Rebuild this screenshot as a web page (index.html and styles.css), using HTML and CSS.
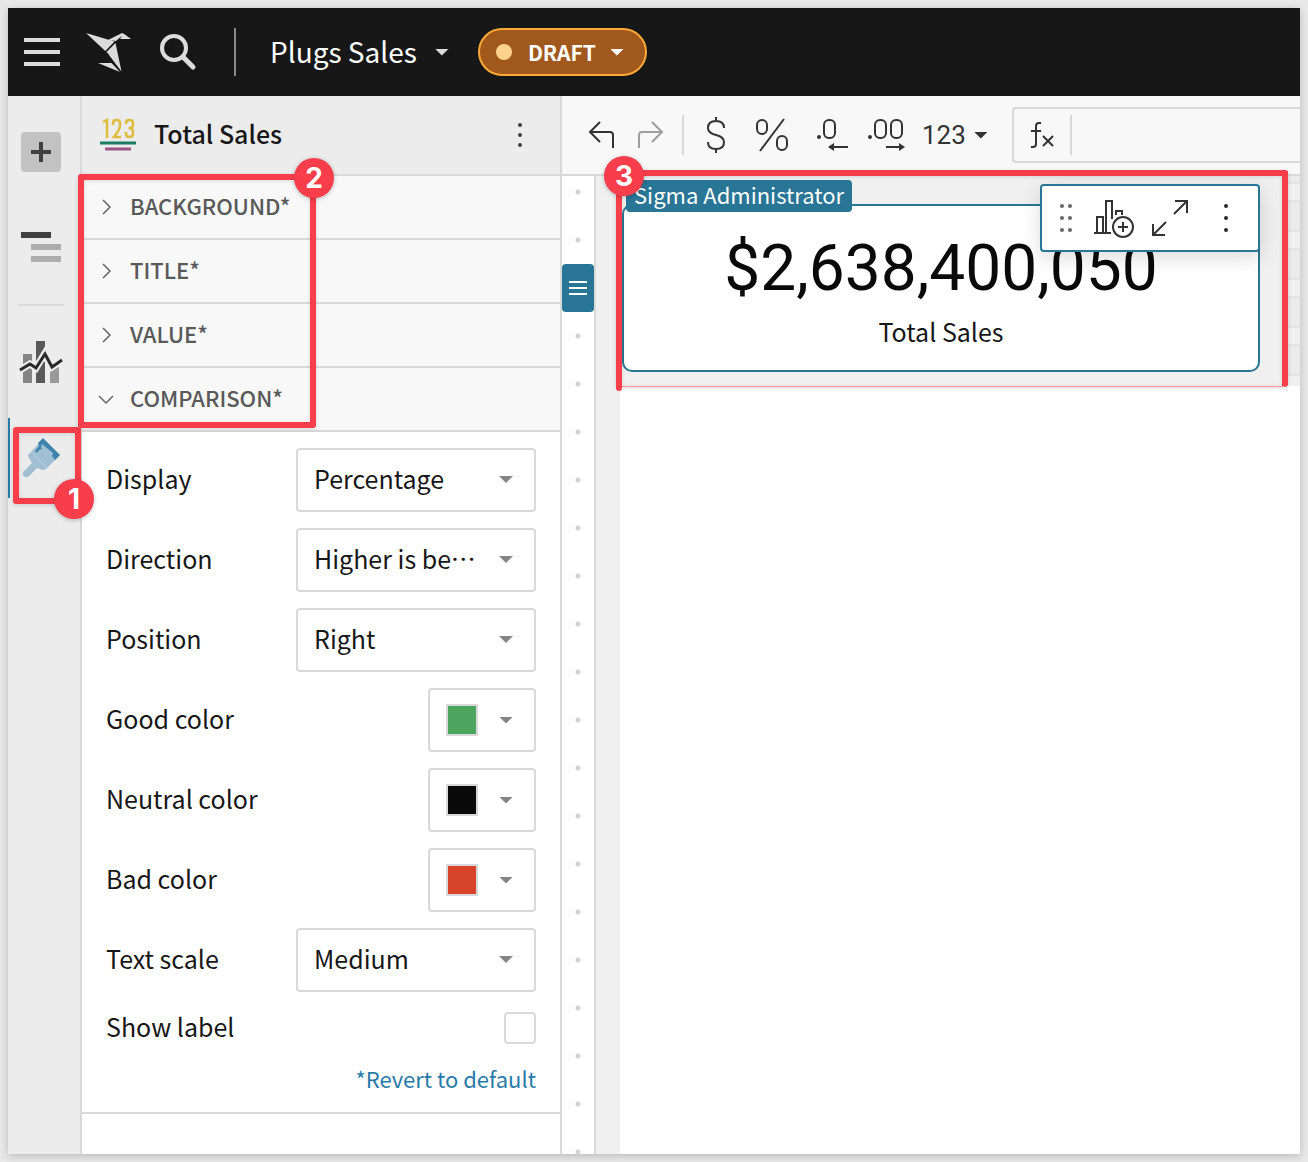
FILE: index.html
```html
<!DOCTYPE html>
<html lang="en">
<head>
<meta charset="utf-8">
<title>Plugs Sales</title>
<link rel="stylesheet" href="styles.css">
</head>
<body>
<div class="app">
  <header class="topbar">
    <button class="icon-btn" aria-label="Menu"><svg width="36" height="28"><path d="M0 2h36M0 14h36M0 26h36" stroke="#dcdcdc" stroke-width="4"/></svg></button>
    <a class="logo" href="#" aria-label="Home"><svg width="48" height="44" fill="#dcdcdc"><path d="M2 3l28.500 8.500L21.300 21zM24 10l14-7 2 1-8 7zM39.500 3.500L47 9H36zM22.500 22l9-9 6 28.500zM14 33h13.500l8.500 9z"/><path d="M23 23l13 18.500" stroke="#171717" stroke-width="1"/></svg></a>
    <button class="icon-btn" aria-label="Search"><svg width="38" height="38" fill="none" stroke="#dcdcdc"><circle cx="14" cy="15" r="12" stroke-width="4"/><path d="M23 24l10 10" stroke-width="5" stroke-linecap="round"/></svg></button>
    <span class="topbar-divider"></span>
    <button class="doc-title"><span>Plugs Sales</span><span class="caret"></span></button>
    <button class="draft"><span class="draft-dot"></span>DRAFT<span class="caret"></span></button>
  </header>

  <div class="workspace">
    <nav class="rail" aria-label="Editor panels">
      <button class="rail-item" aria-label="Add"><span class="plus"><svg width="20" height="20"><path d="M10 0v20M0 10h20" stroke="#404040" stroke-width="4"/></svg></span></button>
      <button class="rail-item" aria-label="Page outline"><svg width="40" height="32"><path d="M0 3h30" stroke="#404040" stroke-width="6"/><path d="M10 15h30M10 27h30" stroke="#adadad" stroke-width="6"/></svg></button>
      <span class="rail-divider"></span>
      <button class="rail-item" aria-label="Element properties"><svg width="44" height="44" fill="none"><path d="M4 14h9v29H4z" fill="#858585"/><path d="M17 1h9v42h-9z" fill="#595959"/><path d="M31 28l9-6v21h-9z" fill="#999"/><path d="M1 30l10-6 6 4 9-15 7 14 11-7" stroke="#ececec" stroke-width="7"/><path d="M27 1v6l-6 15h6z" fill="#ececec"/><path d="M1 30l10-6 6 4 9-14 7 13 10-7" stroke="#292929" stroke-width="3"/></svg></button>
      <button class="rail-item is-active" aria-label="Element format"><svg width="42" height="40" viewBox="0 2 42 40"><path d="M23 3l17 16-14 14c-4 3-6-1-9-1L10 39c-2 4-9 2-7-3l9-9c-1-3-4-5-4-8z" fill="#a1bfd3"/><path d="M18 7l5-5 17 17-5 5-3-4 1-3-11-9-1 3 1 2-3 1-2 3-2-2 4-5z" fill="#3c84ae"/><path d="M11 16l15 15" stroke="#b9cfde"/></svg></button>
    </nav>

    <aside class="panel">
      <header class="panel-header">
        <svg width="36" height="34" fill="none"><path d="M3 4l4-2v18M13 7V5q0-3 3.500-3t3.500 3v3q0 3-6 11h7M26 6V5q0-3 3.500-3t3.500 3v2q0 3-4.500 3q4.500 0 4.500 4v2q0 3-3.500 3t-3.500-3v-2" stroke="#e0bc3e" stroke-width="2.500"/><path d="M0 25h36" stroke="#1c7c64" stroke-width="3"/><path d="M5 31h26" stroke="#9a5384" stroke-width="3"/></svg>
        <h1>Total Sales</h1>
        <button class="icon-btn" aria-label="More"><svg width="8" height="28" fill="#404040"><circle cx="4" cy="4" r="2"/><circle cx="4" cy="14" r="2"/><circle cx="4" cy="24" r="2"/></svg></button>
      </header>
      <button class="section"><svg class="chevron" width="18" height="18"><path d="M6 2l7 7-7 7"/></svg><span>BACKGROUND*</span></button>
      <button class="section"><svg class="chevron" width="18" height="18"><path d="M6 2l7 7-7 7"/></svg><span>TITLE*</span></button>
      <button class="section"><svg class="chevron" width="18" height="18"><path d="M6 2l7 7-7 7"/></svg><span>VALUE*</span></button>
      <button class="section" aria-expanded="true"><svg class="chevron" width="18" height="18"><path d="M2 6l7 7 7-7"/></svg><span>COMPARISON*</span></button>
      <form class="fields">
        <div class="field"><label for="display">Display</label><span class="select"><select id="display"><option>Percentage</option></select></span></div>
        <div class="field"><label for="direction">Direction</label><span class="select"><select id="direction"><option>Higher is better</option></select></span></div>
        <div class="field"><label for="position">Position</label><span class="select"><select id="position"><option>Right</option></select></span></div>
        <div class="field"><label for="good">Good color</label><button type="button" class="color" id="good"><span class="swatch good"></span><span class="caret"></span></button></div>
        <div class="field"><label for="neutral">Neutral color</label><button type="button" class="color" id="neutral"><span class="swatch neutral"></span><span class="caret"></span></button></div>
        <div class="field"><label for="bad">Bad color</label><button type="button" class="color" id="bad"><span class="swatch bad"></span><span class="caret"></span></button></div>
        <div class="field"><label for="scale">Text scale</label><span class="select"><select id="scale"><option>Medium</option></select></span></div>
        <div class="field short"><label for="show">Show label</label><input type="checkbox" id="show"></div>
        <a class="revert" href="#">*Revert to default</a>
      </form>
    </aside>

    <main class="main">
      <div class="toolbar">
        <button class="icon-btn" aria-label="Undo"><svg class="line" width="28" height="28"><path d="M13 1L3 11l10 10M3 11h20q3 0 3 3v13"/></svg></button>
        <button class="icon-btn redo" aria-label="Redo" disabled><svg class="line" width="28" height="28"><path d="M15 1l10 10-10 10M25 11H5q-3 0-3 3v13"/></svg></button>
        <span class="toolbar-divider"></span>
        <button class="icon-btn currency" aria-label="Currency"><svg class="line" width="20" height="36"><path d="M10 0v5M10 31v5M18 11q0-7-8-7t-8 7q0 5 8 7t8 7q0 7-8 7t-8-7"/></svg></button>
        <button class="icon-btn percent" aria-label="Percent"><svg class="line" width="34" height="34"><path d="M29 1L5 33"/><rect x="2" y="2" width="10" height="14" rx="5"/><rect x="22" y="18" width="10" height="14" rx="5"/></svg></button>
        <button class="icon-btn decrease" aria-label="Decrease decimals"><svg class="line" width="32" height="34"><rect x="7" y="2" width="11" height="18" rx="5"/><path d="M12 29h19"/><g class="solid"><circle cx="2" cy="19" r="2"/><path d="M11 29l6-4v8z"/></g></svg></button>
        <button class="icon-btn increase" aria-label="Increase decimals"><svg class="line" width="38" height="34"><rect x="7" y="2" width="11" height="18" rx="5"/><rect x="23" y="2" width="11" height="18" rx="5"/><path d="M18 29h17"/><g class="solid"><circle cx="2" cy="19" r="2"/><path d="M37 29l-6-4v8z"/></g></svg></button>
        <button class="number-format">123<span class="caret"></span></button>
        <div class="formula"><label for="formula" aria-label="Formula"><svg class="line" width="26" height="28"><path d="M11 2H9Q6 2 6 5v18q0 3-3 3H1M1 10h10M13 15l10 10M23 15L13 25"/></svg></label><input type="text" id="formula"></div>
      </div>
      <div class="stage">
        <div class="gutter"><button class="gutter-handle" aria-label="Outline"><svg width="18" height="14"><path d="M0 1h18M0 7h18M0 13h18" stroke="#fff" stroke-width="2"/></svg></button></div>
        <div class="canvas">
          <div class="grid-area">
            <section class="card">
              <span class="owner">Sigma Administrator</span>
              <p class="kpi">$2,638,400,050</p>
              <p class="kpi-label">Total Sales</p>
              <div class="card-tools">
                <button class="icon-btn drag" aria-label="Drag"><svg width="14" height="28" fill="#666"><circle cx="3" cy="2" r="2"/><circle cx="11" cy="2" r="2"/><circle cx="3" cy="14" r="2"/><circle cx="11" cy="14" r="2"/><circle cx="3" cy="26" r="2"/><circle cx="11" cy="26" r="2"/></svg></button>
                <button class="icon-btn" aria-label="Create child element"><svg class="line" width="42" height="40"><path d="M1 35h17M4 35V19h6v16M13 35V3h6v18M23 17v-4h6v4"/><circle cx="30" cy="29" r="10"/><path d="M30 24v10M25 29h10"/></svg></button>
                <button class="icon-btn" aria-label="Maximize"><svg class="line" width="38" height="38"><path d="M23 15L36 2M24 2h12v12M15 23L2 36M2 25v11h12"/></svg></button>
                <button class="icon-btn more" aria-label="More"><svg width="8" height="28" fill="#292929"><circle cx="4" cy="2" r="2"/><circle cx="4" cy="14" r="2"/><circle cx="4" cy="26" r="2"/></svg></button>
              </div>
            </section>
            <div class="mark mark-three"><b>3</b></div>
          </div>
          <div class="sheet"></div>
        </div>
      </div>
    </main>
  </div>
  <div class="mark mark-one"><b>1</b></div>
  <div class="mark mark-two"><b>2</b></div>
</div>
</body>
</html>
```
FILE: styles.css
```css
* { box-sizing: border-box; }
body {
  margin: 0;
  padding: 8px;
  min-height: 100vh;
  display: flex;
  background: #e8e8e8;
  color: #171717;
  font-family: "Noto Sans CJK SC", "Noto Sans", sans-serif;
  font-size: 25px;
  line-height: 32px;
}
button, input, select { font: inherit; color: inherit; margin: 0; }
button { border: 0; padding: 0; background: none; }
svg { display: block; flex: none; }
h1, p { margin: 0; }
.icon-btn { display: flex; flex: none; }
.caret {
  flex: none;
  width: 14px;
  height: 7px;
  background: currentColor;
  clip-path: polygon(0 0, 100% 0, 50% 100%);
}
.line { fill: none; stroke: #333; stroke-width: 2; }
.solid { fill: #333; stroke: none; }

.app {
  position: relative;
  flex: 1;
  min-width: 0;
  display: flex;
  flex-direction: column;
  background: #fff;
  box-shadow: 0 2px 8px rgba(0, 0, 0, .2);
}

.topbar {
  display: flex;
  align-items: center;
  height: 88px;
  padding-left: 16px;
  background: #171717;
  color: #fff;
}
.logo { margin: 0 28px 0 24px; }
.topbar-divider { width: 2px; height: 48px; margin: 0 34px 0 36px; background: #8a8a8a; }
.doc-title { display: flex; align-items: center; gap: 18px; font-size: 28px; }
.doc-title span:first-child { padding-bottom: 2px; }
.doc-title .caret { background: #dcdcdc; }
.draft {
  display: flex;
  align-items: center;
  height: 48px;
  margin-left: 29px;
  padding: 0 21px 0 16px;
  border: 2px solid #ffa936;
  border-radius: 24px;
  background: #a1581d;
  font-size: 21px;
  font-weight: 700;
}
.draft-dot { width: 16px; height: 16px; margin-right: 16px; border-radius: 50%; background: #ffd28c; }
.draft .caret { margin-left: 14px; }

.workspace { flex: 1; display: flex; min-height: 0; }
.rail {
  flex: none;
  display: flex;
  flex-direction: column;
  gap: 16px;
  width: 74px;
  padding-top: 16px;
  border-right: 2px solid #d9d9d9;
  background: #ececec;
}
.rail-item { display: flex; align-items: center; justify-content: center; height: 80px; padding-right: 6px; }
.rail-item.is-active { box-shadow: inset 2px 0 #297aa8; }
.plus { display: grid; place-items: center; width: 40px; height: 40px; border-radius: 4px; background: #c2c2c2; }
.rail-divider { height: 2px; margin: 0 16px 0 10px; background: #d9d9d9; }

.panel { flex: none; width: 480px; border-right: 2px solid #d9d9d9; }
.panel-header {
  display: flex;
  align-items: center;
  height: 80px;
  padding: 0 36px 0 18px;
  border-bottom: 2px solid #d9d9d9;
  background: #ececec;
}
.panel-header h1 { flex: 1; margin-left: 18px; padding-bottom: 4px; font-size: 25px; line-height: 32px; font-weight: 500; }
.section {
  display: flex;
  align-items: center;
  gap: 15px;
  width: 100%;
  height: 64px;
  padding-left: 15px;
  border-bottom: 2px solid #d9d9d9;
  background: #f8f8f8;
  color: #595959;
  font-size: 22px;
  font-weight: 500;
}
.section span { padding-bottom: 4px; }
.chevron { fill: none; stroke: #666; stroke-width: 1.5; }
.fields {
  display: flex;
  flex-direction: column;
  gap: 16px;
  padding: 16px 24px 20px;
  border-bottom: 2px solid #d9d9d9;
}
.field { display: flex; align-items: center; justify-content: space-between; height: 64px; }
.field label { padding-bottom: 4px; }
.field.short { height: 40px; }
.select { position: relative; display: flex; width: 240px; }
.select::after {
  content: "";
  position: absolute;
  top: 28px;
  right: 23px;
  width: 14px;
  height: 7px;
  background: #858585;
  clip-path: polygon(0 0, 100% 0, 50% 100%);
  pointer-events: none;
}
select {
  appearance: none;
  width: 100%;
  height: 64px;
  padding: 0 56px 4px 16px;
  border: 2px solid #d9d9d9;
  border-radius: 4px;
  background: #fff;
  font-family: "Noto Sans CJK KR", "Noto Sans", sans-serif;
  line-height: 56px;
  text-overflow: ellipsis;
  overflow: hidden;
  white-space: nowrap;
}
.color {
  display: flex;
  align-items: center;
  justify-content: space-between;
  width: 108px;
  height: 64px;
  padding: 0 21px 0 16px;
  border: 2px solid #d9d9d9;
  border-radius: 4px;
  color: #858585;
}
.swatch { width: 32px; height: 32px; border: 2px solid #d9d9d9; }
.good { background: #4ca55f; }
.neutral { background: #0a0a0a; }
.bad { background: #d6432a; }
input[type="checkbox"] { appearance: none; width: 32px; height: 32px; border: 2px solid #d9d9d9; border-radius: 4px; }
.revert { align-self: flex-end; color: #297aa8; font-size: 22px; line-height: 28px; text-decoration: none; }

.main { flex: 1; min-width: 0; display: flex; flex-direction: column; }
.toolbar {
  display: flex;
  align-items: center;
  height: 80px;
  padding-left: 25px;
  border-bottom: 2px solid #d9d9d9;
  background: #f8f8f8;
  overflow: hidden;
}
.redo { margin-left: 22px; opacity: .45; }
.toolbar-divider { flex: none; width: 2px; height: 40px; margin-left: 17px; background: #d9d9d9; }
.currency { margin-left: 22px; }
.percent { margin-left: 29px; }
.decrease { margin-left: 28px; }
.increase { margin-left: 19px; }
.number-format { display: flex; align-items: center; gap: 8px; margin-left: 16px; color: #333; font-family: Roboto, sans-serif; font-size: 26px; }
.formula {
  flex: 1;
  display: flex;
  align-items: center;
  height: 56px;
  margin-left: 24px;
  border: 2px solid #d9d9d9;
  border-right: 0;
  border-radius: 4px 0 0 4px;
}
.formula label { padding: 6px 14px 6px 16px; border-right: 2px solid #d9d9d9; }
.formula input { flex: 1; min-width: 0; height: 48px; border: 0; background: none; }

.stage { flex: 1; display: flex; }
.gutter {
  flex: none;
  width: 34px;
  padding-top: 88px;
  border-right: 2px solid #d9d9d9;
  background: radial-gradient(circle at 16px 16px, #d4d4d4 2px, transparent 3px) 0 0 / 32px 48px;
}
.gutter-handle { display: grid; place-items: center; width: 32px; height: 48px; border-radius: 4px; background: #297595; }
.canvas { flex: 1; min-width: 0; display: flex; flex-direction: column; background: #f0f0f0; }
.grid-area {
  position: relative;
  height: 210px;
  padding: 28px 40px 0 26px;
  background: linear-gradient(#e4e4e4 0 2px, #ebebeb 2px 30px, #e4e4e4 30px 32px, #f0f0f0 32px) right 24px / 16px 48px repeat-y;
}
.card {
  position: relative;
  height: 168px;
  padding-top: 25px;
  border: 2px solid #297595;
  border-radius: 10px;
  background: #fff;
  text-align: center;
}
.kpi { font-family: Roboto, sans-serif; font-size: 64px; line-height: 76px; color: #0a0a0a; }
.kpi-label { margin-top: 8px; }
.owner {
  position: absolute;
  top: -26px;
  left: 2px;
  height: 32px;
  padding: 0 8px;
  border-radius: 4px;
  background: #297595;
  color: #fff;
  font-size: 22px;
  line-height: 28px;
}
.card-tools {
  position: absolute;
  top: -22px;
  right: -2px;
  display: flex;
  align-items: center;
  gap: 16px;
  width: 220px;
  height: 68px;
  padding: 0 28px 0 17px;
  border: 2px solid #297595;
  border-radius: 4px;
  background: #fff;
  box-shadow: 0 6px 20px rgba(0, 0, 0, .14);
}
.drag { margin-right: 4px; }
.more { margin-left: auto; }
.sheet { flex: 1; margin-left: 24px; border-top-left-radius: 6px; background: #fff; }

.mark { position: absolute; border: 6px solid #f83e4b; border-radius: 3px; pointer-events: none; box-shadow: 0 1px 4px rgba(0, 0, 0, .15), inset 0 1px 4px rgba(0, 0, 0, .12); }
.mark b {
  position: absolute;
  width: 40px;
  height: 40px;
  border-radius: 50%;
  background: #f83e4b;
  color: #fff;
  font: 700 28px/40px Inter, sans-serif;
  text-align: center;
  box-shadow: 0 1px 4px rgba(0, 0, 0, .25);
}
.mark-one { left: 5px; top: 419px; width: 68px; height: 77px; }
.mark-one b { right: -19px; bottom: -21px; }
.mark-two { left: 70px; top: 166px; width: 238px; height: 254px; }
.mark-two b { right: -24px; top: -22px; }
.mark-three { left: 20px; top: -6px; right: 12px; height: 217px; border-bottom: 1px solid #ff929b; }
.mark-three::after {
  content: "";
  position: absolute;
  left: -6px;
  bottom: -5px;
  width: 6px;
  height: 6px;
  border-radius: 0 0 3px 3px;
  background: #f83e4b;
}
.mark-three b { left: -18px; top: -20px; }
```
